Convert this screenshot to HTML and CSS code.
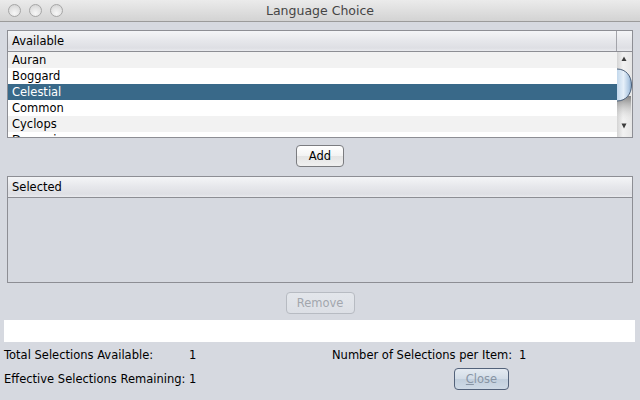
FILE: index.html
```html
<!DOCTYPE html>
<html lang="en">
<head>
<meta charset="utf-8">
<title>Language Choice</title>
<link rel="stylesheet" href="styles.css">
</head>
<body>
<div class="window">
  <div class="titlebar">
    <div class="lights"><span class="light"></span><span class="light"></span><span class="light"></span></div>
    <div class="title">Language Choice</div>
    <div></div>
  </div>
  <div class="content">
    <div class="table avail">
      <div class="thead">
        <div class="th th-main">Available</div>
        <div class="th-corner"></div>
      </div>
      <div class="tbody">
        <div class="rows">
          <div class="row odd">Auran</div>
          <div class="row">Boggard</div>
          <div class="row selected">Celestial</div>
          <div class="row">Common</div>
          <div class="row odd">Cyclops</div>
          <div class="row">Draconic</div>
        </div>
        <div class="scrollbar">
          <svg width="15" height="85" viewBox="0 0 15 85">
            <defs>
              <linearGradient id="track" x1="0" y1="0" x2="1" y2="0">
                <stop offset="0" stop-color="#d4d4d4"/>
                <stop offset="0.4" stop-color="#f2f2f2"/>
                <stop offset="1" stop-color="#e6e6e6"/>
              </linearGradient>
              <linearGradient id="shadow" x1="0" y1="0" x2="0" y2="1">
                <stop offset="0" stop-color="#6f6f6f" stop-opacity="0.85"/>
                <stop offset="1" stop-color="#dcdcdc" stop-opacity="0"/>
              </linearGradient>
              <linearGradient id="thumb" x1="0" y1="0" x2="1" y2="0">
                <stop offset="0" stop-color="#c3d8ec"/>
                <stop offset="0.45" stop-color="#e6f0f9"/>
                <stop offset="0.8" stop-color="#b2cbe4"/>
                <stop offset="1" stop-color="#87a7c8"/>
              </linearGradient>
            </defs>
            <rect x="0" y="0" width="15" height="85" fill="url(#track)"/>
            <rect x="0" y="44" width="14" height="24" fill="url(#shadow)"/>
            <path d="M0,17 C9,17 14.5,24 14.5,33 C14.5,42 9,49 0,49 Z" fill="url(#thumb)"/>
            <path d="M0,17 C9,17 14.5,24 14.5,33 C14.5,42 9,49 0,49" fill="none" stroke="#4b5f78" stroke-width="1"/>
            <polygon points="7,4.5 4.5,9 9.5,9" fill="#3c3c3c"/>
            <polygon points="4.5,71.5 9.5,71.5 7,76.5" fill="#3c3c3c"/>
          </svg>
        </div>
      </div>
    </div>

    <div class="btnrow add-row"><button class="btn">Add</button></div>

    <div class="table sel">
      <div class="thead">
        <div class="th th-full">Selected</div>
      </div>
      <div class="tbody empty"></div>
    </div>

    <div class="btnrow remove-row"><button class="btn disabled">Remove</button></div>

    <div class="whitebar"></div>

    <div class="info">
      <div class="lbl">Total Selections Available:</div>
      <div class="val">1</div>
      <div class="lbl">Number of Selections per Item:</div>
      <div class="val">1</div>
      <div class="lbl">Effective Selections Remaining:</div>
      <div class="val">1</div>
      <div class="close-cell"><button class="btn close"><span class="u">C</span>lose</button></div>
      <div></div>
    </div>
  </div>
</div>
</body>
</html>
```

FILE: styles.css
```css
html, body {
  margin: 0;
  padding: 0;
}
body {
  width: 640px;
  height: 400px;
  overflow: hidden;
  background: #d6d9e0;
  font-family: "DejaVu Sans", "Liberation Sans", sans-serif;
  font-size: 11.5px;
  color: #000;
}
.window {
  width: 640px;
  height: 400px;
  display: flex;
  flex-direction: column;
}
.titlebar {
  height: 21px;
  border-bottom: 1px solid #9b9b9b;
  background: linear-gradient(#ebebeb, #d3d3d3);
  display: grid;
  grid-template-columns: 1fr auto 1fr;
  align-items: center;
}
.lights {
  display: flex;
  gap: 8px;
  padding-left: 8px;
}
.light {
  width: 11px;
  height: 11px;
  border-radius: 50%;
  border: 1px solid #a6a6a6;
  background: radial-gradient(circle at 50% 75%, #f7f7f7 0%, #e3e3e3 55%, #cfcfcf 100%);
}
.title {
  font-size: 12.5px;
  color: #454545;
}
.content {
  display: flex;
  flex-direction: column;
}
.table {
  margin: 0 7px;
  border: 1px solid #8d8e94;
  display: flex;
  flex-direction: column;
}
.avail {
  margin-top: 8px;
}
.thead {
  height: 20px;
  border-bottom: 1px solid #8d8e94;
  display: flex;
  background: linear-gradient(#f4f5f7 0%, #e6e7eb 50%, #dedfe4 85%, #e9eaee 100%);
}
.th {
  line-height: 20px;
  padding-left: 4px;
  box-sizing: border-box;
}
.th-main {
  width: 609px;
  border-right: 1px solid #a3a4aa;
}
.th-full {
  flex: 1;
}
.th-corner {
  flex: 1;
}
.tbody {
  height: 85px;
  display: flex;
  background: #fff;
}
.rows {
  width: 609px;
  overflow: hidden;
}
.row {
  height: 16px;
  line-height: 16px;
  padding-left: 4px;
  white-space: nowrap;
}
.row.odd {
  background: #f2f2f2;
}
.row.selected {
  background: #396989;
  color: #fff;
}
.scrollbar {
  width: 15px;
  height: 85px;
}
.scrollbar svg {
  display: block;
}
.btnrow {
  display: flex;
  justify-content: center;
}
.add-row {
  margin-top: 7px;
}
.remove-row {
  margin-top: 9px;
}
.btn {
  height: 22px;
  padding: 0 10px;
  font-family: "DejaVu Sans", "Liberation Sans", sans-serif;
  font-size: 11.5px;
  color: #000;
  border: 1px solid #7b7c80;
  border-radius: 4px;
  background: linear-gradient(#ffffff 0%, #f3f3f3 50%, #e4e4e4 51%, #f0f0f0 100%);
}
.add-row .btn {
  width: 48px;
  padding: 0;
}
.btn.disabled {
  width: 69px;
  padding: 0;
  color: #a2a6ad;
  border-color: #b7bbc2;
  background: linear-gradient(#e3e6eb, #dcdfe5);
}
.sel {
  margin-top: 9px;
}
.tbody.empty {
  height: 84px;
  background: #d6d9e0;
}
.whitebar {
  height: 22px;
  margin: 6px 5px 0 4px;
  background: #fff;
}
.info {
  display: grid;
  grid-template-columns: 185px 143px 187px 1fr;
  grid-template-rows: 26px 22px;
  align-items: center;
  padding-left: 4px;
}
.close-cell {
  padding-left: 122px;
  display: flex;
  height: 22px;
}
.btn.close {
  width: 55px;
  padding: 0;
  color: #8895a5;
  border-color: #53627a;
  background: linear-gradient(#e4eaf1 0%, #d2dce7 50%, #c2cfdd 51%, #cfdae6 100%);
}
.u {
  text-decoration: underline;
}
```
